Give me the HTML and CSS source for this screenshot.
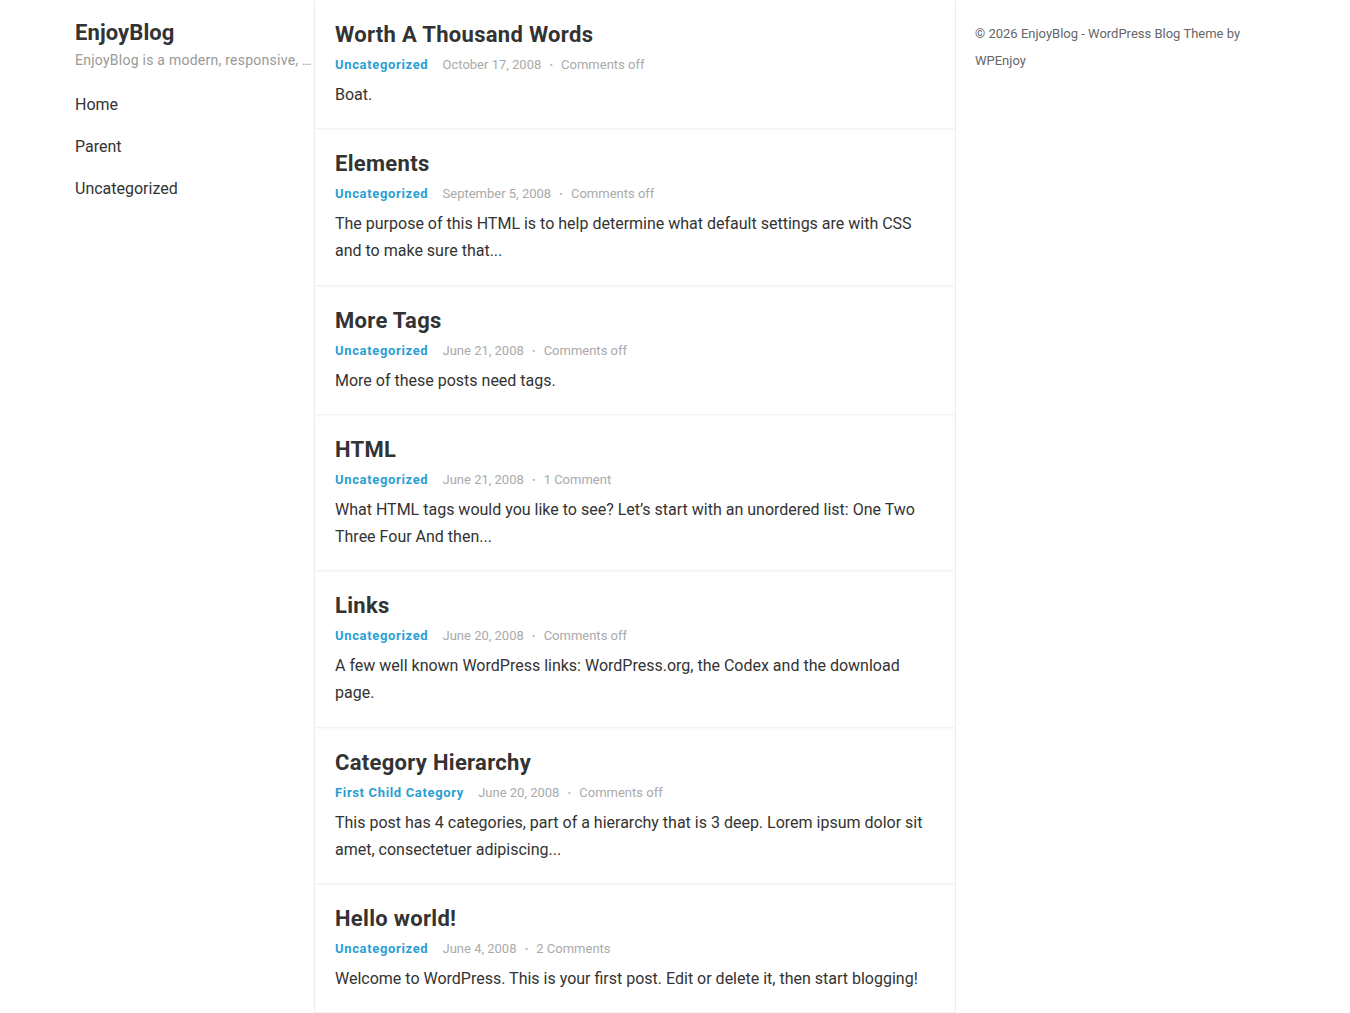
FILE: index.html
```html
<!DOCTYPE html>
<html lang="en">
<head>
  <meta charset="UTF-8" />
  <meta name="viewport" content="width=device-width, initial-scale=1.0"/>
  <title>EnjoyBlog</title>
  <link rel="stylesheet" href="styles.css">
</head>
<body>
  <div class="site">
    <aside class="left-sidebar">
      <div class="site-title">EnjoyBlog</div>
      <p class="site-description">EnjoyBlog is a modern, responsive, clean WordPress blog theme.</p>
      <nav class="main-nav">
        <a href="#">Home</a>
        <a href="#">Parent</a>
        <a href="#">Uncategorized</a>
      </nav>
    </aside>

    <main class="content">
      <article class="post">
        <h2 class="entry-title">Worth A Thousand Words</h2>
        <div class="entry-meta">
          <a class="cat" href="#">Uncategorized</a>
          <span class="date">October 17, 2008</span>
          <span class="sep">&bull;</span>
          <span class="comments">Comments off</span>
        </div>
        <p class="excerpt">Boat.</p>
      </article>

      <article class="post">
        <h2 class="entry-title">Elements</h2>
        <div class="entry-meta">
          <a class="cat" href="#">Uncategorized</a>
          <span class="date">September 5, 2008</span>
          <span class="sep">&bull;</span>
          <span class="comments">Comments off</span>
        </div>
        <p class="excerpt">The purpose of this HTML is to help determine what default settings are with CSS and to make sure that...</p>
      </article>

      <article class="post">
        <h2 class="entry-title">More Tags</h2>
        <div class="entry-meta">
          <a class="cat" href="#">Uncategorized</a>
          <span class="date">June 21, 2008</span>
          <span class="sep">&bull;</span>
          <span class="comments">Comments off</span>
        </div>
        <p class="excerpt">More of these posts need tags.</p>
      </article>

      <article class="post">
        <h2 class="entry-title">HTML</h2>
        <div class="entry-meta">
          <a class="cat" href="#">Uncategorized</a>
          <span class="date">June 21, 2008</span>
          <span class="sep">&bull;</span>
          <span class="comments">1 Comment</span>
        </div>
        <p class="excerpt">What HTML tags would you like to see? Let’s start with an unordered list: One Two Three Four And then...</p>
      </article>

      <article class="post">
        <h2 class="entry-title">Links</h2>
        <div class="entry-meta">
          <a class="cat" href="#">Uncategorized</a>
          <span class="date">June 20, 2008</span>
          <span class="sep">&bull;</span>
          <span class="comments">Comments off</span>
        </div>
        <p class="excerpt">A few well known WordPress links: WordPress.org, the Codex and the download page.</p>
      </article>

      <article class="post">
        <h2 class="entry-title">Category Hierarchy</h2>
        <div class="entry-meta">
          <a class="cat" href="#">First Child Category</a>
          <span class="date">June 20, 2008</span>
          <span class="sep">&bull;</span>
          <span class="comments">Comments off</span>
        </div>
        <p class="excerpt">This post has 4 categories, part of a hierarchy that is 3 deep. Lorem ipsum dolor sit amet, consectetuer adipiscing...</p>
      </article>

      <article class="post">
        <h2 class="entry-title">Hello world!</h2>
        <div class="entry-meta">
          <a class="cat" href="#">Uncategorized</a>
          <span class="date">June 4, 2008</span>
          <span class="sep">&bull;</span>
          <span class="comments">2 Comments</span>
        </div>
        <p class="excerpt">Welcome to WordPress. This is your first post. Edit or delete it, then start blogging!</p>
      </article>
    </main>

    <aside class="right-sidebar">
      <p class="site-info">&copy; 2026 EnjoyBlog - WordPress Blog Theme by WPEnjoy</p>
    </aside>
  </div>
</body>
</html>
```

FILE: styles.css
```css
:root {
  --texto: #333;
  --cinza: #999;
  --azul: #2a9fd4;
  --linha: #eeeeee;
}

* {
  box-sizing: border-box;
  margin: 0;
  padding: 0;
}

body {
  font-family: Roboto, "Liberation Sans", Arial, sans-serif;
  background-color: #fff;
  color: var(--texto);
}

a {
  color: inherit;
  text-decoration: none;
}

.site {
  width: 1200px;
  margin: 0 auto;
  display: flex;
  align-items: stretch;
  min-height: 100vh;
}

/* coluna da esquerda */
.left-sidebar {
  width: 239px;
  flex-shrink: 0;
  padding-top: 20px;
}

.site-title {
  font-size: 22px;
  font-weight: 700;
  line-height: 26px;
  letter-spacing: 0.1px;
  color: #333;
}

.site-description {
  font-size: 14px;
  color: var(--cinza);
  line-height: 24px;
  letter-spacing: 0.25px;
  margin-top: 2px;
  white-space: nowrap;
  overflow: hidden;
  text-overflow: ellipsis;
}

.main-nav {
  display: flex;
  flex-direction: column;
  margin-top: 12px;
}

.main-nav a {
  font-size: 16px;
  line-height: 42px;
  color: #333;
}

/* posts */
.content {
  width: 642px;
  flex-shrink: 0;
  border-left: 1px solid #f2f2f2;
  border-right: 1px solid #f2f2f2;
}

.post {
  padding: 21px 20px 20px 20px;
  margin-bottom: 1px;
  box-shadow: 0 1px 2px rgba(0,0,0,0.07);
}

.entry-title {
  font-size: 22px;
  font-weight: 700;
  line-height: 28px;
  letter-spacing: 0.3px;
  color: #333;
}

.entry-meta {
  margin-top: 6px;
  font-size: 13px;
  line-height: 20px;
  color: #aaa;
}

.entry-meta .cat {
  color: var(--azul);
  font-weight: 700;
  letter-spacing: 0.65px;
  margin-right: 11px;
}

.entry-meta .sep {
  font-size: 10px;
  margin: 0 5px;
  color: #bbb;
}

.excerpt {
  margin-top: 5px;
  font-size: 16px;
  line-height: 1.7;
  color: #333;
}

/* coluna da direita */
.right-sidebar {
  flex: 1;
  padding: 20px 20px 0 19px;
}

.site-info {
  font-size: 13px;
  line-height: 27px;
  color: #666;
}
```
